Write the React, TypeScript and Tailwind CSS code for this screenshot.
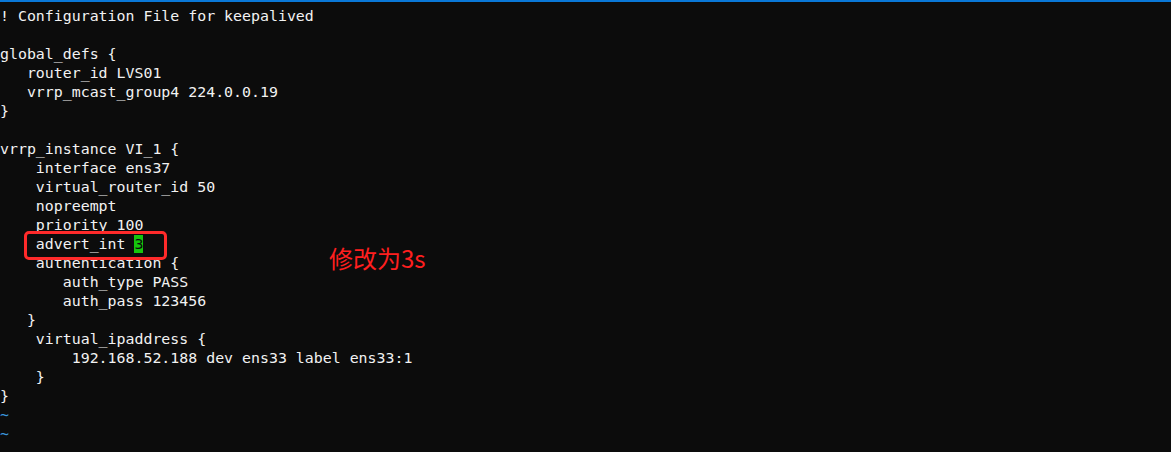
import React from "react";

const lines: string[] = [
  "! Configuration File for keepalived",
  "",
  "global_defs {",
  "   router_id LVS01",
  "   vrrp_mcast_group4 224.0.0.19",
  "}",
  "",
  "vrrp_instance VI_1 {",
  "    interface ens37",
  "    virtual_router_id 50",
  "    nopreempt",
  "    priority 100",
  "__CURSOR__",
  "    authentication {",
  "       auth_type PASS",
  "       auth_pass 123456",
  "   }",
  "    virtual_ipaddress {",
  "        192.168.52.188 dev ens33 label ens33:1",
  "    }",
  "}",
];

export default function App() {
  return (
    <div className="w-[1171px] h-[452px] bg-[#0c0c0c] overflow-hidden relative">
      <div className="h-[2px] bg-[#0a78d7]" />
      <div
        className="pt-[5px] text-[14.9px] leading-[19px] text-[#f2f2f2] whitespace-pre"
        style={{ fontFamily: '"DejaVu Sans Mono", "Liberation Mono", monospace' }}
      >
        {lines.map((l, i) =>
          l === "__CURSOR__" ? (
            <div key={i} className="h-[19px]">
              {"    advert_int "}
              <span className="bg-[#16c60c] text-[#0c0c0c]">3</span>
            </div>
          ) : (
            <div key={i} className="h-[19px]">
              {l}
            </div>
          )
        )}
        <div className="h-[19px] text-[#3a96dd]">~</div>
        <div className="h-[19px] text-[#3a96dd]">~</div>
      </div>
      <div className="absolute left-[24px] top-[231px] w-[143px] h-[29px] border-[3px] border-[#ff2a2a] rounded-[5px]" />
      <div
        className="absolute left-[329px] top-[241px] text-[24px] leading-[34px] text-[#ff1f1f]"
        style={{ fontFamily: '"Noto Sans CJK SC", "Noto Sans", sans-serif' }}
      >
        修改为3s
      </div>
    </div>
  );
}
